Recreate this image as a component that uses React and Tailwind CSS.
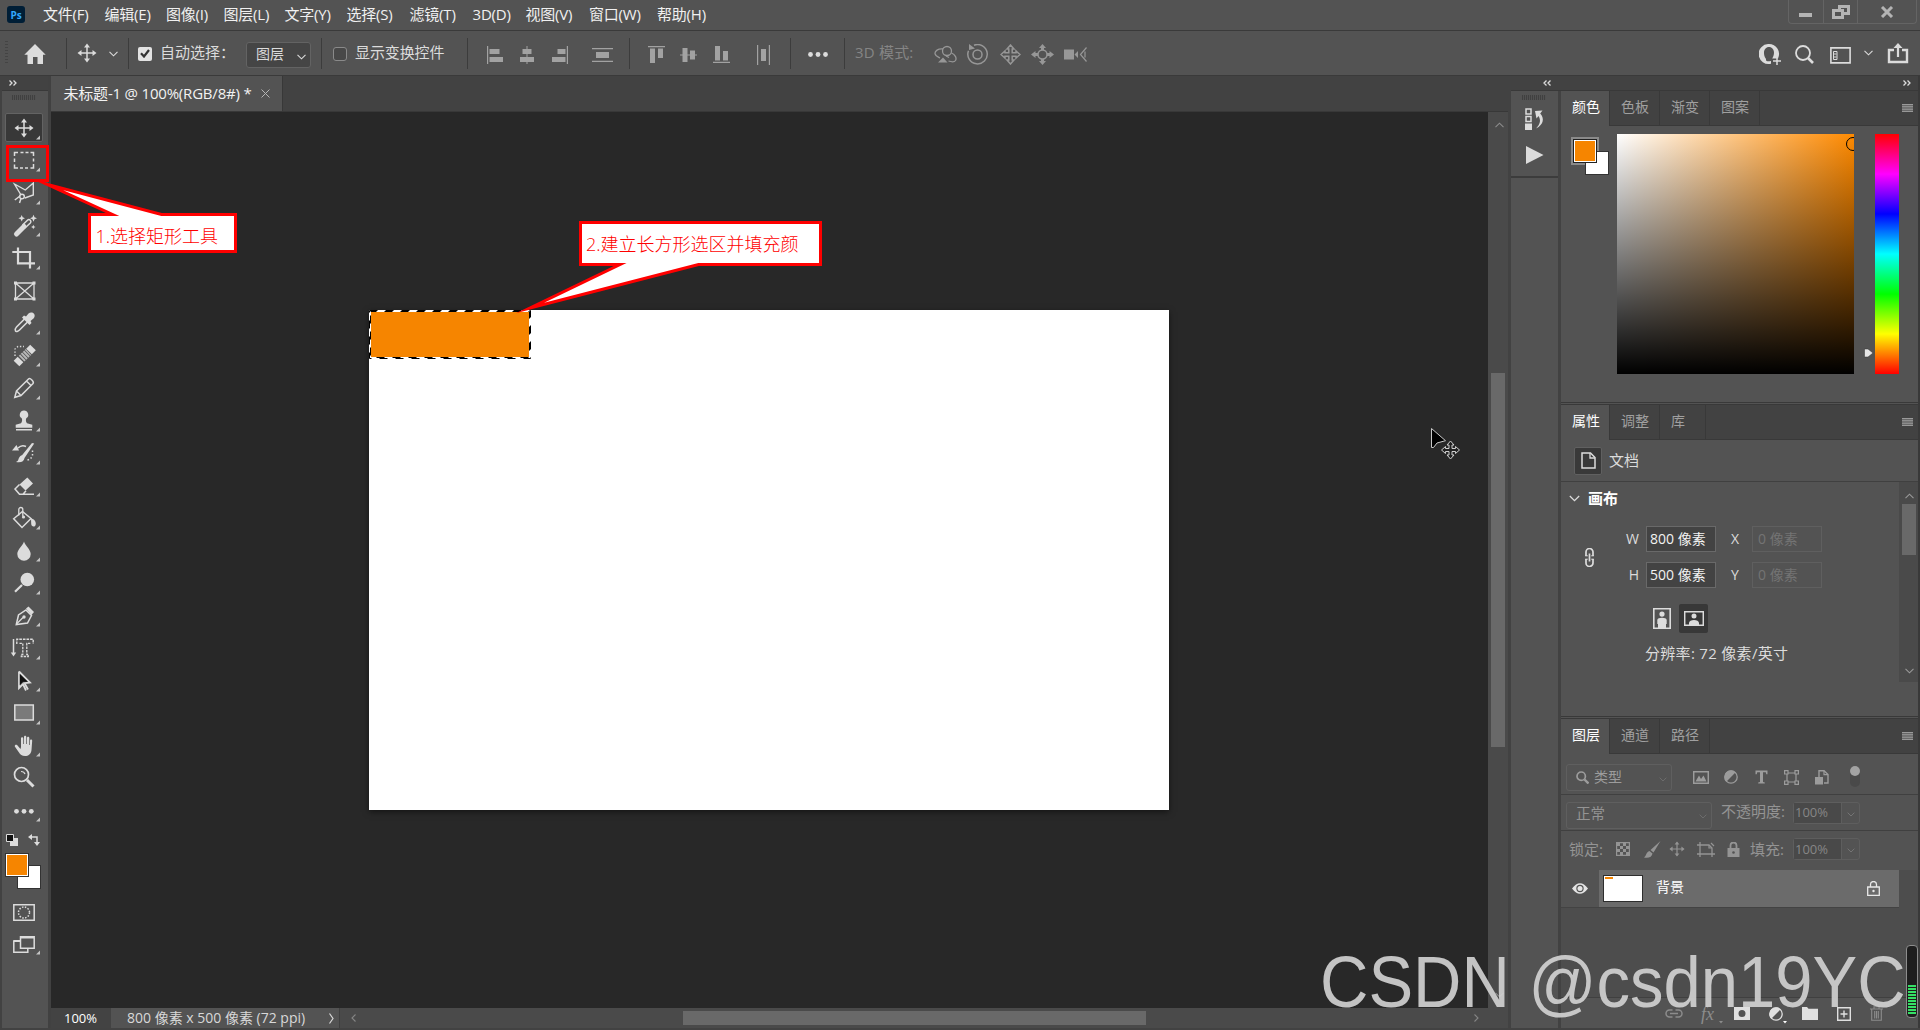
import React from "react";

/* ---------- small building blocks ---------- */
const Svg = ({ w = 24, h = 24, vb, className = "", children }) => (
  <svg width={w} height={h} viewBox={vb || `0 0 ${w} ${h}`} fill="none" stroke="currentColor" strokeWidth="1.5" className={"shrink-0 " + className}>
    {children}
  </svg>
);
const F = { fill: "currentColor", stroke: "none" };

const Chevron = ({ className = "", w = 9, h = 6 }) => (
  <Svg w={w} h={h} vb="0 0 9 6" className={className}>
    <path d="M.5 .8 4.5 4.8 8.5 .8" strokeWidth="1.1" />
  </Svg>
);
const Double = ({ left, className = "" }) => (
  <Svg w={8} h={6} className={className}>
    <path d={left ? "M3.5 .5 1 3 3.5 5.5M7.5 .5 5 3 7.5 5.5" : "M.5 .5 3 3 .5 5.5M4.5 .5 7 3 4.5 5.5"} strokeWidth="1.3" />
  </Svg>
);
const Grip = ({ className = "" }) => (
  <div className={"h-[5px] w-6 shrink-0 bg-[repeating-linear-gradient(90deg,#404040_0_1px,#515151_1px_2px)] " + className} />
);
const Sep = ({ className = "" }) => <div className={"h-[31px] w-px shrink-0 bg-[#3c3c3c] " + className} />;

const MoveGlyph = () => (
  <>
    <path d="M12 4v16M4 12h16" strokeWidth="1.5" />
    <path {...F} d="M12 2.5 15 6.5H9zM12 21.5 9 17.5h6zM2.5 12l4-3v6zM21.5 12l-4 3V9z" />
  </>
);

/* ---------- menu bar ---------- */
const menus = [
  ["文件(F)", "w-[61.5px]"], ["编辑(E)", "w-[61.5px]"], ["图像(I)", "w-[57.5px]"], ["图层(L)", "w-[61px]"],
  ["文字(Y)", "w-[62px]"], ["选择(S)", "w-[63px]"], ["滤镜(T)", "w-[63px]"], ["3D(D)", "w-[53px]"],
  ["视图(V)", "w-[63.5px]"], ["窗口(W)", "w-[68px]"], ["帮助(H)", "w-[60px]"],
];

function MenuBar() {
  return (
    <div className="flex h-[30px] items-start bg-[#535353]">
      <div className="mt-[6px] ml-[7px] flex h-[17px] w-[18px] items-center justify-center rounded-[3px] bg-[#001e36] text-[10px] font-bold text-[#31a8ff]">Ps</div>
      <div className="ml-[18px] flex h-[29px] items-center text-[15px] tracking-[-0.2px] text-[#f0f0f0]">
        {menus.map(([t, w]) => (
          <span key={t} className={"whitespace-nowrap " + w}>{t}</span>
        ))}
      </div>
      <div className="mr-[3px] ml-auto flex h-[24px] w-[129px] rounded-b-[4px] border border-t-0 border-[#646464] text-[#b4b4b4]">
        <div className="flex w-[35px] justify-center border-r border-[#646464]"><div className="mt-[13px] mr-px h-[4px] w-[13px] bg-[#b4b4b4]" /></div>
        <div className="flex w-[34px] justify-center border-r border-[#646464]">
          <Svg w={18} h={16} className="mt-[4px]"><path d="M1.5 6.5h9v7h-9zM7.5 6V2.5h9v7h-5" strokeWidth="3" /></Svg>
        </div>
        <div className="flex flex-1 justify-center">
          <Svg w={14} h={12} className="mt-[6px]"><path d="M2 1 12 11M12 1 2 11" strokeWidth="3" /></Svg>
        </div>
      </div>
    </div>
  );
}

/* ---------- options bar ---------- */
function OptionsBar() {
  return (
    <div className="flex h-[46px] items-center border-y border-t-[#3a3a3a] border-b-[#3a3a3a] bg-[#535353] text-[#dcdcdc]">
      <div className="ml-[5px] h-[24px] w-[3px] bg-[repeating-linear-gradient(#444_0_1px,#535353_1px_3px)]" />
      <Svg w={22} h={20} className="mt-[2px] ml-[16px]"><path {...F} d="M11 0 .3 10.8H3.5V20H9v-7h4.500v7H19V10.800h2.700z" /></Svg>
      <Sep className="ml-[20px]" />
      <Svg className="ml-[8px]" ><MoveGlyph /></Svg>
      <Chevron className="mt-[2px] ml-[10px]" />
      <Sep className="ml-[10px]" />
      <div className="mt-px ml-[9px] flex size-[14px] items-center justify-center rounded-[2px] bg-[#e3e3e3] text-[#333]">
        <Svg w={10} h={9}><path d="M1 4.200 4 7.500 9 1" strokeWidth="2.200" /></Svg>
      </div>
      <span className="mb-px ml-[8px] w-[85px] text-[15px] whitespace-nowrap">自动选择：</span>
      <div className="mt-[4px] ml-px flex h-[26px] w-[65px] items-center rounded-[3px] border border-[#636363] bg-[#454545] pl-[9px] pb-[2px] text-[14px]">
        图层<Chevron className="mt-[5px] ml-[13px]" />
      </div>
      <Sep className="ml-[10px]" />
      <div className="mt-[2px] ml-[11px] size-[14px] rounded-[3px] border border-[#8a8a8a] bg-[#484848]" />
      <span className="mb-px ml-[8px] w-[112px] text-[15px] tracking-[-0.1px] whitespace-nowrap">显示变换控件</span>
      <Sep />
      <div className="mt-[3px] flex items-center text-[#a2a2a2]">
        <Svg w={16} h={18} className="ml-[19px]"><path {...F} d="M0 0h1.200v18H0zM2.500 3h10v5h-10zM2.500 11h13.500v5H2.500z" /></Svg>
        <Svg w={14} h={18} className="ml-[17px]"><path {...F} d="M6.500 0h1v18h-1zM2.500 3h9v5h-9zM0 11h14v5H0z" /></Svg>
        <Svg w={16} h={18} className="ml-[18px]"><path {...F} d="M14.800 0H16v18h-1.200zM5.500 3h8v5h-8zM0 11h13.500v5H0z" /></Svg>
        <Svg w={21} h={14} className="ml-[24px]"><path {...F} d="M0 0h21v1.200H0zM0 12.800h21V14H0zM4 4h13v6H4z" /></Svg>
      </div>
      <Sep className="ml-[16px]" />
      <div className="mt-[3px] flex items-center text-[#a2a2a2]">
        <Svg w={17} h={17} className="ml-[18px]"><path {...F} d="M0 0h17v1.200H0zM2 2.500h5V17H2zM10 2.500h5V12h-5z" /></Svg>
        <Svg w={17} h={16} className="ml-[15px]"><path {...F} d="M0 7.400h17v1.200H0zM2.500 1h5v14h-5zM10 3.500h5v9h-5z" /></Svg>
        <Svg w={17} h={17} className="ml-[16px]"><path {...F} d="M0 15.800h17V17H0zM2 0h5v14.500H2zM10 5h5v9.500h-5z" /></Svg>
        <Svg w={13} h={20} className="ml-[27px]"><path {...F} d="M0 0h1.200v20H0zM11.800 0H13v20h-1.200zM4 4h5v12H4z" /></Svg>
      </div>
      <Sep className="ml-[20px]" />
      <Svg w={20} h={5} className="mt-[2px] ml-[17px]"><g {...F}><circle cx="2.500" cy="2.500" r="2.400" /><circle cx="10" cy="2.500" r="2.400" /><circle cx="17.500" cy="2.500" r="2.400" /></g></Svg>
      <Sep className="ml-[16px]" />
      <span className="mb-px ml-[10px] w-[79px] text-[15px] tracking-[0.2px] whitespace-nowrap text-[#858585]">3D 模式:</span>
      <div className="mt-[2px] flex items-center text-[#979797]">
        <Svg w={23} h={20}>
          <circle cx="13" cy="7" r="4.500" strokeWidth="1.300" /><path d="M9 5C4 4.500 .8 7 1 9.500c.2 2.500 3 3.500 5 4.500M17.500 9c3.500 1.500 5.500 5 4 7.500-1 1.500-4 1.500-7 .5M12 12l3 1.500" strokeWidth="1.300" /><path {...F} d="M9 13.500 13.500 18.500H4z" />
        </Svg>
        <Svg w={21} h={21} className="ml-[10px]">
          <circle cx="10.500" cy="10.500" r="4.500" /><path d="M7 1.200a9.700 9.700 0 1 1-5.500 5.500" /><path {...F} d="M2 0v6l6-1.500z" />
        </Svg>
        <Svg w={21} h={21} className="ml-[12px]"><path d="M10.500 1 14 5H12.200v3.800H16V7l4 3.500-4 3.500v-1.800h-3.800V16H14l-3.500 4L7 16h1.800v-3.800H5V14l-4-3.500L5 7v1.800h3.800V5H7z" /></Svg>
        <Svg w={23} h={21} className="ml-[10px]"><circle cx="11.500" cy="10.500" r="4.500" /><path {...F} d="M11.500 0 15 4h-2v2h-3V4H8zM11.500 21 8 17h2v-2h3v2h2zM0 10.500 4.500 7v2H7v3H4.500v2zM23 10.500 18.500 14v-2H16V9h2.500V7z" /></Svg>
        <Svg w={23} h={17} className="ml-[10px]"><path {...F} d="M0 3.500h10v10H0zM10.500 8.500 14 5v7z" /><path d="M22.500 1.500 16.500 8.500l6 7M21 5.500v6" strokeWidth="1.200" /></Svg>
      </div>
      <Svg w={22} h={21} className="mt-[2px] ml-auto">
        <path {...F} fillRule="evenodd" d="M10 0a10 10 0 1 0 2 19.700V17l-1.500.3C8 17.500 6.800 17 7 15c-1.800-2.500-2-4.500-2-6.500C5 5.500 7 3 10 3s5 2.500 5 5.500c0 2-.5 4-1.800 6H19A10 10 0 0 0 10 0z" />
        <path d="M18 13v8M14 17h8" />
      </Svg>
      <Svg w={19} h={19} className="mt-[2px] ml-[14px]"><circle cx="8" cy="8" r="7" strokeWidth="1.800" /><path d="m13 13 5 5" strokeWidth="2.600" /></Svg>
      <Svg w={21} h={17} className="ml-[16px] mt-[4px]"><path d="M.9.9h19.200v15H.9z" strokeWidth="1.600" /><path d="M3.500 4.500h3.500v8H3.500zM3.500 7h3M3.500 10h3" strokeWidth="1" /></Svg>
      <Chevron className="ml-[13px]" />
      <Svg w={22} h={21} className="mr-[11px] ml-[14px]"><path d="M7 7H2v12h18V7h-5" strokeWidth="2.400" /><path d="M11 14V4" strokeWidth="2.200" /><path {...F} d="M11 0 15.500 5h-9z" /></Svg>
    </div>
  );
}

/* ---------- left tool column ---------- */
const star = (x, y, r) => <path {...F} d={`M${x} ${y - r}l${r * 0.3} ${r * 0.7} ${r * 0.7} ${r * 0.3} ${-r * 0.7} ${r * 0.3} ${-r * 0.3} ${r * 0.7} ${-r * 0.3} ${-r * 0.7} ${-r * 0.7} ${-r * 0.3} ${r * 0.7} ${-r * 0.3}z`} />;

const tools = [
  { id: "move", g: <MoveGlyph /> },
  { id: "marquee", g: <path d="M2.500 7V3.500H6M8.500 3.500h3M13.500 3.500h3M18.500 3.500H21.500V7M21.500 9.500v3M21.500 15V19H18.500M16 19h-3M11 19H8M6 19H2.500V15.500M2.500 13V9.500" /> },
  { id: "lasso", g: <><path d="M9 14 2.500 3 13.300 9l8-7v12l-8.500 3" strokeWidth="1.400" /><circle cx="10" cy="15.500" r="2.300" /><path d="M8 15 2.800 19M9 17.500 7.500 22" /></> },
  { id: "wand", g: <><path d="M4.500 20 12 12.500" strokeWidth="5" strokeLinecap="round" /><path d="M10.500 11 15.500 6.200a1.800 1.800 0 0 1 2.800 2.800L13 14" />{star(9.700, 4.300, 3.300)}{star(21.500, 4.300, 3.500)}{star(21.300, 13, 2.200)}</> },
  { id: "crop", g: <path d="M6 1.500V17.300H23M.3 6H18V22.500" strokeWidth="2.200" /> },
  { id: "frame", nt: true, g: <><path d="M3.500 4h18.500v16H3.500zM3.500 4 22 20M22 4 3.500 20" strokeWidth="1.300" /><path {...F} d="M2 2.500h3v3H2zM20.500 2.500h3v3h-3zM2 18.500h3v3H2zM20.500 18.500h3v3h-3z" /></> },
  { id: "eyedropper", g: <><path d="M12.500 8 4.500 16c-1.500 1.500-1.500 3-1 4s2.500.5 4-1l8-8" strokeWidth="1.600" /><path {...F} d="M10 6.500l2-2 2 1 2.500-3C18.500.8 21 1.500 22 2.800s1 3-.5 4.700l-3 2.500 1 2-2 2z" /></> },
  { id: "heal", g: <><path d="M4.500 19.500l4-4" strokeWidth="8" /><path d="M17 7.500l4-4" strokeWidth="8" /><path d="M9.500 14.700 16.500 8" strokeWidth="8" stroke="#b8b8b8" strokeDasharray="2 .8" /><path d="M3 12V5l3-2.500h6" strokeWidth="1.400" strokeDasharray="1.400 1.800" /></> },
  { id: "pencil", g: <path d="M2.800 21.300 4.500 15 16.500 3c1.500-1.500 6 2.500 4.500 4.500L9 19.500zM4.500 15l4.500 4.500M14.500 5l4.500 4.500" /> },
  { id: "stamp", g: <path {...F} d="M12 1.500a4.200 4.200 0 0 1 2.500 7.600c-1 .9-.8 4 .5 5.200l5.300 1.500v3H3.700v-3L9 14.300c1.300-1.200 1.500-4.300.5-5.200A4.200 4.200 0 0 1 12 1.500zM4 20h16v1.400H4z" /> },
  { id: "history", g: <><path {...F} d="M22.200 2.500 12.500 17c-.5 3.500-3.500 5-8.500 4 2.200-1 2.200-2 2.700-3.500.8-2 2-3 3.300-3.300L20 2z M0 9.500 4.500 4 7 9.500z" /><path d="M6 7C9 4 12 4.500 14 5.500" /><path d="M20.500 9.500v5c-1 2.500-2.500 4-5 4.500" strokeDasharray="1.500 2" /></> },
  { id: "eraser", g: <><path {...F} d="M15.300 3.500 21 9.500l-7.500 7-6-6z" /><path d="M7.500 10.500 3 15l4.500 5.200H22M7.500 20.200h3.500l3-3.500" /></> },
  { id: "bucket", g: <><path d="M10.500 5.500 19 12.500 10 21.500 1.700 12.700z" /><path d="M6.800 9.500V3.500a2 2 0 0 1 4 0v6.500" strokeWidth="1.300" /><path {...F} d="M19 12.500c3.500.5 4.800 3 4.800 5.200s-1.200 2.800-2.300 2.800-2.300-1-2.300-2.800z" /><circle cx="11.500" cy="11" r="1.600" {...F} /></> },
  { id: "blur", g: <path {...F} d="M12 2.500c1 4 6.700 8 6.700 12.500a6.700 6.700 0 0 1-13.400 0C5.300 10.500 11 6.500 12 2.500z" /> },
  { id: "dodge", g: <><circle cx="15.300" cy="8.500" r="6.800" {...F} /><path d="M10 14 3 20.800" strokeWidth="2.200" /></> },
  { id: "pen", g: <><path d="M4.300 20.500 6.500 11l7.500-5 5.500 5.500-4 7.500z" /><path d="M4.500 20 11 13.500" strokeWidth="1.200" /><circle cx="12" cy="13" r="1.700" {...F} /><path {...F} d="M14 4.500 16.500 2.500 22 8l-2.500 3z" /></> },
  { id: "type", g: <><path d="M1.500 3v14" /><path {...F} d="M-1.200 16.500h5.400L1.500 20.500z" /><path d="M4.800 8V3.300H21.200V8" strokeWidth="1.400" strokeDasharray="2.600 1" /><path d="M7.500 7.300h3.300V18.500H9.300v2h7v-2h-1.500V7.300h3.500" strokeWidth="1.300" strokeDasharray="2.400 1" /></> },
  { id: "path", g: <><path d="M7 2.500V19l4-4 3 6.500" strokeWidth="1.800" /><path d="M7 2.500 18 13.500 12.500 14.200 16 20.500" strokeWidth="1.800" /><path d="M7.800 5V16l3-3.200h5z" fill="#111" stroke="none" /></> },
  { id: "rect", g: <rect x="2.800" y="4" width="18.500" height="15" fill="#7a7a7a" /> },
  { id: "hand", g: <path {...F} d="M9 13V4.500c0-1.700 2.200-1.700 2.300 0V10h.7V3c0-1.700 2.300-1.700 2.300 0v7h.7V4c0-1.600 2.300-1.600 2.300 0v7h.7V6.500c0-1.500 2.200-1.500 2.200 0L19.500 16c-.5 4-3 6-6.500 6-3 0-4.800-1.500-6-3.500L2.800 12.500c-.3-1.400 1.200-2.200 2.500-1.200L8.500 15z" /> },
  { id: "zoom", nt: true, g: <><circle cx="9.500" cy="8.500" r="7" strokeWidth="1.700" /><path d="M9 5.500c2 0 3.500 1 4 2.500" strokeWidth="1.200" /><path d="m15 14 6.500 6.500" strokeWidth="3" /></> },
  { id: "more", g: <g {...F}><circle cx="4.500" cy="12.300" r="2.400" /><circle cx="12" cy="12.300" r="2.400" /><circle cx="19.300" cy="12.300" r="2.400" /></g> },
];

const Tri = () => <Svg w={5} h={5} className="absolute right-[5px] bottom-[5px] text-[#c4c4c4]"><path {...F} d="M5 .5V4.500H1z" /></Svg>;

function ToolBar() {
  return (
    <div className="flex w-[51px] shrink-0 flex-col border-r-[3px] border-l-2 border-r-[#414141] border-l-[#424242] bg-[#535353] text-[#dcdcdc]">
      <div className="flex h-[14px] items-center bg-[#424242] pl-[7px]"><Double className="mb-px" /></div>
      <div className="h-px bg-[#393939]" />
      <Grip className="mt-[4px] ml-[10px]" />
      <div className="mt-[12px] flex flex-col">
        {tools.map((t, i) => (
          <div key={t.id} className="relative flex h-[32.5px] w-[43px] items-center pl-[10px]">
            {i === 0 && <div className="absolute top-[1px] left-[3px] h-[29px] w-[38px] rounded-[2px] border border-[#636363] bg-[#383838]" />}
            <Svg className="relative overflow-visible">{t.g}</Svg>
            {!t.nt && <Tri />}
          </div>
        ))}
      </div>
      <div className="mt-[7px] flex items-center">
        <Svg w={12} h={12} className="ml-[4px]"><path {...F} d="M4 4h8v8H4z" /><path d="M.5.5h7v7h-7z" fill="#111" strokeWidth="1" /></Svg>
        <Svg w={12} h={12} className="ml-[10px]"><path d="M3 3h6v6" /><path {...F} d="M0 3l4-3v6zM9 12 6 8h6z" /></Svg>
      </div>
      <div className="mt-[7px] ml-[3px] grid h-[37px] w-[37px]">
        <div className="col-start-1 row-start-1 mt-[12px] ml-[12px] size-[24px] border border-[#333] bg-white" />
        <div className="relative col-start-1 row-start-1 size-[24px] border border-[#333] bg-[#f68500] inset-ring-1 inset-ring-white" />
      </div>
      <Svg w={22} h={17} className="mt-[14px] ml-[11px]"><path d="M.8.8h20.400v15.400H.8z" /><circle cx="11" cy="8.500" r="5.500" strokeDasharray="1.500 1.400" /></Svg>
      <div className="relative mt-[15px] h-[24px] w-[43px]">
        <Svg w={22} h={17} className="ml-[11px]"><path d="M7 5H.8v11.200h14V13" /><path d="M7.500.8h13.700v11.400H7.500z" /><path d="M.8 5H7M7.500 1.500h13.700" strokeWidth="2" /></Svg>
        <Tri />
      </div>
    </div>
  );
}

/* ---------- document area ---------- */
function DocumentArea() {
  return (
    <div className="flex w-[1457px] shrink-0 flex-col">
      <div className="flex h-[36px] shrink-0 border-b border-[#383838] bg-[#424242]">
        <div className="flex w-[232px] items-center border-r border-[#383838] bg-[#535353] pl-[12.500px] text-[15px] text-[#f2f2f2]">
          <span className="mb-px w-[197.500px] tracking-[-0.2px] whitespace-nowrap">未标题-1 @ 100%(RGB/8#) *</span>
          <Svg w={9} h={9} className="text-[#b5b5b5]"><path d="M.5.5l8 8M8.500.5l-8 8" strokeWidth="1" /></Svg>
        </div>
      </div>
      <div className="flex h-[896px]">
        <div className="w-[1437px] bg-[#282828] pt-[198px] pl-[318px]">
          <div className="h-[500px] w-[800px] bg-white shadow-[0_2px_6px_rgba(0,0,0,0.5)]">
            <Svg w={163} h={50}>
              <path d="M1 1h160v47H1z" fill="#f68500" stroke="#fff" strokeWidth="2" />
              <path d="M.500.500h161v48H.5z" stroke="#000" strokeWidth="1" strokeDasharray="8 8" />
              <path d="M1.500 1.500h159v46H1.500z" stroke="#000" strokeWidth="1" strokeDasharray="8 8" strokeDashoffset="2" />
            </Svg>
          </div>
        </div>
        <div className="flex w-[20px] flex-col items-center bg-[#4a4a4a] text-[#8c8c8c]">
          <Chevron className="mt-[10px] ml-[3px] rotate-180" />
          <div className="mt-[245px] h-[374px] w-[14px] bg-[#696969]" />
          <Chevron className="mt-auto mb-[10px] ml-[3px]" />
        </div>
      </div>
      <div className="flex h-[20px] items-center bg-[#4a4a4a] text-[14px] text-[#d8d8d8]">
        <div className="flex h-full w-[60px] items-center bg-[#434343] pl-[13px] text-[13px] text-white">100%</div>
        <div className="flex h-full w-[229px] items-center border-r border-[#404040] bg-[#535353] pl-[16px]">
          <span className="w-[202px] whitespace-nowrap">800 像素 x 500 像素 (72 ppi)</span>
          <Svg w={5} h={11}><path d="M.5.5 4 5.500.5 10.500" strokeWidth="1.200" /></Svg>
        </div>
        <Svg w={5} h={8} className="ml-[11px] text-[#858585]"><path d="M4.500.5 1 4l3.500 3.500" strokeWidth="1.100" /></Svg>
        <div className="ml-[327px] h-[14px] w-[463px] bg-[#696969]" />
        <Svg w={5} h={8} className="ml-[328px] text-[#858585]"><path d="M.5.5 4 4 .5 7.500" strokeWidth="1.100" /></Svg>
      </div>
    </div>
  );
}

/* ---------- collapsed icon strip ---------- */
function IconStrip() {
  return (
    <div className="flex w-[47px] flex-col bg-[#535353] text-[#dcdcdc]">
      <div className="flex h-[87px] flex-col items-start border-b-2 border-[#3c3c3c]">
        <Grip className="mt-[4px] ml-[11px]" />
        <Svg w={20} h={22} className="mt-[8px] ml-[14px]">
          <path d="M1 1h5v5H1zM1 8.500h5v5H1z" strokeWidth="1.500" /><path {...F} d="M0 15.500h7V22H0zM10 3l7.500-.5-2.300 3C19.500 10 19 16.500 11 20.500c4.500-4.500 5-8.500 2.500-12.500L11.500 10.500z" />
        </Svg>
        <Svg w={18} h={18} className="mt-[16px] ml-[15px]"><path {...F} d="M0 0 17.500 9 0 18z" /></Svg>
      </div>
    </div>
  );
}

/* ---------- right panels ---------- */
const MenuLines = () => <Svg w={11} h={8} className="mr-[5px] ml-auto text-[#c0c0c0]"><path d="M0 .8h11M0 2.900h11M0 5.100h11M0 7.200h11" strokeWidth="1" /></Svg>;

function Tabs({ names, widths }) {
  return (
    <div className="flex h-[35px] shrink-0 items-center border-b border-[#393939] bg-[#424242] text-[14px]">
      {names.map((n, i) => (
        <div key={n} className={"flex h-[35px] items-center border-r border-[#393939] pl-[11px] pb-[3px] " + widths[i] + (i === 0 ? " bg-[#535353] text-white" : " text-[#a0a0a0]")}>{n}</div>
      ))}
      <MenuLines />
    </div>
  );
}

function ColorPanel() {
  return (
    <div className="flex h-[312px] flex-col border-b border-[#393939]">
      <Tabs names={["颜色", "色板", "渐变", "图案"]} widths={["w-[49px]", "w-[50px]", "w-[50px]", "w-[50px]"]} />
      <div className="flex pt-[8px]">
        <div className="mt-[3px] ml-[10px] grid h-[38px] w-[46px] shrink-0 content-start">
          <div className="col-start-1 row-start-1 size-[28px] bg-[#8a8a8a]" />
          <div className="relative col-start-1 row-start-1 mt-[14px] ml-[14px] size-[24px] border border-[#333] bg-white" />
          <div className="relative col-start-1 row-start-1 mt-[2px] ml-[2px] size-[24px] border border-[#222] bg-[#f68500] inset-ring-1 inset-ring-white" />
        </div>
        <div className="h-[240px] w-[237px] overflow-hidden bg-[linear-gradient(to_top,#000,transparent),linear-gradient(to_right,#fff,#ff8a00)]">
          <div className="mt-[3px] ml-[229px] size-[14px] rounded-full border border-black" />
        </div>
        <Svg w={10} h={10} className="mt-[214px] ml-[10px]"><path d="M.5 1h3.500L9 5 4 9H.5z" fill="#e6e6e6" stroke="#333" strokeWidth=".5" /></Svg>
        <div className="ml-px h-[240px] w-[24px] bg-[linear-gradient(#f00,#f0f_16.7%,#00f_33.3%,#0ff_50%,#0f0_66.7%,#ff0_83.3%,#f00)]" />
      </div>
    </div>
  );
}

const Field = ({ children, off }) => (
  <div className={"flex h-[26px] w-[70px] items-center border pl-[3px] pb-px text-[14px] whitespace-nowrap " + (off ? "border-[#5f5f5f] pl-[5px] text-[#747474]" : "border-[#696969] bg-[#434343] text-[#f2f2f2]")}>{children}</div>
);

function PropertiesPanel() {
  return (
    <div className="mt-px flex h-[313px] flex-col border-y border-[#393939]">
      <Tabs names={["属性", "调整", "库"]} widths={["w-[49px]", "w-[50px]", "w-[46px]"]} />
      <div className="flex h-[42px] shrink-0 items-center border-b border-[#404040] text-[#dcdcdc]">
        <div className="ml-[13px] flex size-[28px] items-center justify-center rounded-[2px] border border-[#606060] bg-[#393939]">
          <Svg w={15} h={17}><path d="M1 1h8.500l4.500 4.500V16H1z" /><path d="M9 1v5h5" strokeWidth="1.300" /></Svg>
        </div>
        <span className="ml-[7px] text-[15px]">文档</span>
      </div>
      <div className="flex h-[200px]">
        <div className="flex w-[339px] flex-col text-[#dcdcdc]">
          <div className="mt-[4px] flex h-[24px] items-center"><Chevron w={11} h={7} className="ml-[8px]" /><span className="ml-[8px] text-[15px] font-bold text-white">画布</span></div>
          <div className="mt-[16px] flex items-center">
            <Svg w={11} h={19} className="ml-[23px]"><path d="M2 8V4a3.500 3.500 0 0 1 7 0v4M2 11v4a3.500 3.500 0 0 0 7 0v-4" strokeWidth="1.700" /><path d="M5.500 5.500v8" strokeWidth="1.700" /><path d="M1.200 7.800h2.600M7.200 7.800h2.600M1.200 11.200h2.600M7.200 11.200h2.600" strokeWidth="1" /></Svg>
            <div className="ml-[26px] grid grid-cols-[25px_70px_36px_70px] items-center gap-y-[10px] text-[14px]">
              <span className="pr-[7px] text-right">W</span><Field>800 像素</Field><span className="pl-[2px] text-center">X</span><Field off>0 像素</Field>
              <span className="pr-[7px] text-right">H</span><Field>500 像素</Field><span className="pl-[2px] text-center">Y</span><Field off>0 像素</Field>
            </div>
          </div>
          <div className="mt-[16px] ml-[92px] flex items-center">
            <Svg w={18} h={21}><path d="M.8.8h16.400v19.400H.8z" strokeWidth="1.600" /><path {...F} d="M9 3.500a2.600 2.600 0 1 1 0 5.200 2.600 2.600 0 0 1 0-5.200zM4.300 12c0-3 9.400-3 9.400 0v4H13v4H5v-4h-.7z" /></Svg>
            <div className="ml-[8px] flex size-[29px] items-center justify-center rounded-[2px] bg-[#383838]">
              <Svg w={20} h={15}><path d="M.7.7h18.600v13.600H.7z" /><path {...F} d="M10 2.500a2.500 2.500 0 1 1 0 5 2.500 2.500 0 0 1 0-5zM5 15v-3c0-4 10-4 10 0v3z" /></Svg>
            </div>
          </div>
          <span className="mt-[13px] ml-[84px] text-[15px] tracking-[0.3px] whitespace-nowrap">分辨率: 72 像素/英寸</span>
        </div>
        <div className="flex w-[19px] flex-col items-center bg-[#4a4a4a] text-[#999]">
          <Chevron className="mt-[11px] ml-[2px] rotate-180" />
          <div className="mt-[5px] h-[51px] w-[14px] bg-[#696969]" />
          <Chevron className="mt-auto mb-[8px] ml-[2px]" />
        </div>
      </div>
    </div>
  );
}

const Percent = () => (
  <div className="flex h-[22px] w-[67px] rounded-[3px] border border-[#5e5e5e]">
    <div className="flex w-[48px] items-center border-r border-[#5e5e5e] bg-[#494949] pl-px text-[13px] text-[#868686]">100%</div>
    <div className="flex flex-1 items-center justify-center text-[#777]"><Chevron w={8} h={5} className="mt-[3px]" /></div>
  </div>
);

function LayersPanel() {
  return (
    <div className="mt-px flex flex-1 flex-col border-t border-[#393939]">
      <Tabs names={["图层", "通道", "路径"]} widths={["w-[49px]", "w-[50px]", "w-[50px]"]} />
      <div className="flex h-[41px] shrink-0 items-center border-b border-[#404040] text-[#9c9c9c]">
        <div className="mt-[7px] ml-[5px] flex h-[27px] w-[106px] items-center rounded-[3px] border border-[#5f5f5f] pl-[9px] text-[14px]">
          <Svg w={13} h={13}><circle cx="5.200" cy="5.200" r="4.200" strokeWidth="1.700" /><path d="m8.500 8.500 4 4" strokeWidth="2.400" /></Svg>
          <span className="mb-[2px] ml-[5px]">类型</span>
          <Chevron w={8} h={5} className="mt-[4px] mr-[4px] ml-auto text-[#6f6f6f]" />
        </div>
        <Svg w={16} h={13} className="mt-[6px] ml-[21px]"><path d="M.7.7h14.600v11.600H.7z" /><path {...F} d="M2.500 10.500 6 4.500l2 3.500 2.500-3.500 3 6z" /></Svg>
        <Svg w={14} h={14} className="mt-[6px] ml-[15px]"><circle cx="7" cy="7" r="6.200" strokeWidth="1.300" /><path {...F} d="M11.700 2.300A6.600 6.600 0 0 0 2.300 11.700z" /></Svg>
        <Svg w={13} h={14} className="mt-[6px] ml-[17px]"><path {...F} d="M.5.5h12v3.800h-1.200l-.5-2H8v9.700l1.800.5v1H3.200v-1L5 12V2.300H2.200l-.5 2H.5z" /></Svg>
        <Svg w={15} h={15} className="mt-[6px] ml-[16px]"><path d="M3 3h9v9H3z" strokeWidth="1.200" /><path d="M.6.600h3.400v3.400H.6zM11 .6h3.400v3.400H11zM.6 11h3.400v3.400H.6zM11 11h3.400v3.400H11z" strokeWidth="1.200" fill="#535353" /></Svg>
        <Svg w={14} h={15} className="mt-[6px] ml-[16px]"><path d="M4 7V.7h5L13 4.500V13H9" strokeWidth="1.400" /><path d="M9 .7v4h4" strokeWidth="1.200" /><path {...F} d="M0 7h8v7.500H0z" /></Svg>
        <div className="mt-[4px] ml-[21px] h-[21px] w-[10px] rounded-full bg-[#494949]"><div className="size-[10px] rounded-full bg-[#a2a2a2]" /></div>
      </div>
      <div className="flex h-[36px] shrink-0 items-center border-b border-[#404040] text-[15px] text-[#949494]">
        <div className="mt-[5px] ml-[5px] flex h-[27px] w-[146px] items-center rounded-[3px] border border-[#5f5f5f] pl-[9px]">
          <span className="mb-[2px] text-[14.500px]">正常</span><Chevron w={8} h={5} className="mt-[3px] mr-[4px] ml-auto text-[#6f6f6f]" />
        </div>
        <span className="mb-[3px] ml-[9px] w-[72px] whitespace-nowrap">不透明度:</span>
        <Percent />
      </div>
      <div className="flex h-[39px] shrink-0 items-center pb-[3px] text-[15px] text-[#949494]">
        <span className="ml-[8px] w-[47px]">锁定:</span>
        <Svg w={14} h={14}><path d="M.6.600h12.800v12.800H.6z" strokeWidth="1.200" /><path {...F} d="M1 1h3v3H1zM7 1h3v3H7zM4 4h3v3H4zM10 4h3v3h-3zM1 7h3v3H1zM7 7h3v3H7zM4 10h3v3H4zM10 10h3v3h-3z" /></Svg>
        <Svg w={17} h={17} className="ml-[14px]"><path {...F} d="M16.500 0 9.500 11.500 6.500 9zM5.500 10 8.500 12.500C8 16 4.500 17.500 0 16.500c2.500-1.500 2-5.500 5.500-6.500z" /></Svg>
        <Svg w={16} h={16} vb="2 2 20 20" className="ml-[8px]"><MoveGlyph /></Svg>
        <Svg w={18} h={15} className="ml-[12px]"><path d="M3 0v15M0 3h12l3 3v9M0 12h18" strokeWidth="1.300" /><path d="M12 3v3h3M14 1l3 3" strokeWidth="1.200" /></Svg>
        <Svg w={13} h={15} className="ml-[12px]"><path {...F} d="M.5 6h12v9H.5z" /><path d="M3.500 6V3.500a3 3 0 0 1 6 0V6" strokeWidth="1.800" /><circle cx="6.500" cy="10.500" r="1.300" fill="#535353" stroke="none" /></Svg>
        <span className="mr-px ml-[10px] w-[42px]">填充:</span>
        <Percent />
      </div>
      <div className="flex h-[128px] shrink-0 border-b border-[#404040] bg-[#4d4d4d]">
        <div className="w-[338px]">
          <div className="flex h-[38px] items-center border-b border-[#434343]">
            <div className="flex h-full w-[38px] items-center bg-[#535353]">
              <Svg w={16} h={11} className="ml-[11px] text-[#e4e4e4]"><path {...F} fillRule="evenodd" d="M0 5.500Q8-5 16 5.500 8 16 0 5.500zM4.300 5.500a3.700 3.700 0 0 0 7.400 0 3.700 3.700 0 0 0-7.400 0z" /><circle cx="8" cy="5.500" r="2.500" {...F} /></Svg>
            </div>
            <div className="flex h-full flex-1 items-center bg-[#6b6b6b]">
              <div className="ml-[4px] h-[27px] w-[40px] border border-[#2e2e2e] bg-white pt-px pl-px"><div className="h-[2px] w-[8px] bg-[#f68500]" /></div>
              <span className="mb-[3px] ml-[13px] text-[14px] text-white">背景</span>
              <Svg w={13} h={15} className="mr-[19px] ml-auto text-[#e8e8e8]"><path d="M.7 6h11.600v8.300H.7zM3.500 6V3.500a3 3 0 0 1 6 0V6" strokeWidth="1.300" /><circle cx="6.500" cy="10" r="1.200" {...F} /></Svg>
            </div>
          </div>
        </div>
      </div>
      <div className="flex h-[30px] items-center pt-[1px] text-[#8c8c8c]">
        <Svg w={18} h={9} className="ml-[104px]"><path d="M7.500 1H4.500a3.500 3.500 0 0 0 0 7h3M10.500 1h3a3.500 3.500 0 0 1 0 7h-3M5 4.500h8" /></Svg>
        <span className="ml-[18px] w-[18px] font-['Liberation_Serif'] text-[18px] leading-none italic">fx</span>
        <Svg w={4} h={3} className="mt-[18px]"><path {...F} d="M0 0h4L2 2.500z" /></Svg>
        <Svg w={16} h={13} className="ml-[11px] text-[#e0e0e0]"><path {...F} fillRule="evenodd" d="M0 0h16v13H0zM4.500 6.500a3.500 3.500 0 0 0 7 0 3.500 3.500 0 0 0-7 0z" /></Svg>
        <Svg w={14} h={14} className="ml-[19px] text-[#e0e0e0]"><circle cx="7" cy="7" r="6.200" strokeWidth="1.300" /><path {...F} d="M11.700 2.300A6.600 6.600 0 0 0 2.300 11.700z" /></Svg>
        <Svg w={4} h={3} className="mt-[18px] text-white"><path {...F} d="M0 0h4L2 2.500z" /></Svg>
        <Svg w={16} h={13} className="ml-[14.500px] text-[#e0e0e0]"><path {...F} d="M0 1.500V0h5l1.500 1.800H16V13H0z" /></Svg>
        <Svg w={14} h={14} className="ml-[19px] text-[#e0e0e0]"><path d="M.7.700h12.600v12.600H.7zM7 3.500v7M3.500 7h7" strokeWidth="1.400" /></Svg>
        <Svg w={13} h={15} className="ml-[19px]"><path d="M0 3h13M4 3V.7h5V3M1.700 3v11.300h9.600V3M4.700 5v7.500M6.500 5v7.500M8.300 5v7.500" strokeWidth="1.100" /></Svg>
      </div>
    </div>
  );
}

/* ---------- annotation overlay ---------- */
function Annotations() {
  return (
    <div className="pointer-events-none absolute inset-0 overflow-hidden text-[18px] text-[#f00]">
      <div className="absolute top-[145px] left-[6px] h-[37px] w-[43px] border-[3px] border-[#f00]" />
      <svg className="absolute inset-0" width="1920" height="1030" fill="#fff" stroke="#f00" strokeWidth="3" strokeMiterlimit="40">
        <path d="M89.500 214.500H112.500L47 184.300 161.500 214.500H235.500V251.500H89.500z" />
        <path d="M580.500 222.500H820.500V264.500H698.500L530 308 620 264.500H580.500z" />
      </svg>
      <div className="absolute top-[214px] left-[95.500px] flex h-[40px] items-center pt-[4px] font-light whitespace-nowrap">1.选择矩形工具</div>
      <div className="absolute top-[221px] left-[586px] flex h-[45px] items-center pt-px font-light whitespace-nowrap">2.建立长方形选区并填充颜</div>
      <svg className="absolute top-[427px] left-[1430px]" width="32" height="34" fill="#000" stroke="#c8c8c8" strokeWidth="1">
        <path d="M1.500 1.500V20.500H3.500L7 16l8.500-2.300z" />
        <path stroke="#d0d0d0" strokeWidth="1" d="M20.500 14l3.500 4h-2v3.500h3.500v-2l4 3.500-4 3.500v-2H22V28h2l-3.500 4-3.500-4h2v-3.500h-3.500v2l-4-3.500 4-3.500v2H19V18h-2z" fill="#222" />
      </svg>
      <div className="absolute top-[945px] left-[1906px] flex h-[73px] w-[12px] flex-col justify-end rounded-[4px] border border-[#8d8d8d] bg-[#1e1e1e] p-px pb-[3px]">
        <div className="h-[29px] bg-[repeating-linear-gradient(#35e065_0_2px,#1e1e1e_2px_3px)]" />
      </div>
      <div className="absolute top-[943px] left-[1320px] origin-left scale-x-[0.918] font-['Liberation_Sans'] text-[73px] leading-[78px] whitespace-nowrap text-[#d4d4d4]/90">CSDN @csdn19YC</div>
    </div>
  );
}

export default function App() {
  return (
    <div className="relative flex h-[1030px] w-[1920px] flex-col overflow-hidden bg-[#424242] font-['Open_Sans','Noto_Sans_CJK_SC',sans-serif] leading-none select-none">
      <MenuBar />
      <OptionsBar />
      <div className="flex h-[952px]">
        <ToolBar />
        <DocumentArea />
        <div className="ml-[3px] flex w-[409px] flex-col border-r-2 border-[#393939]">
          <div className="flex h-[14px] shrink-0 items-center bg-[#424242] text-[#dcdcdc]">
            <Double left className="mb-px ml-[32px]" />
            <Double className="mr-[7px] mb-px ml-auto" />
          </div>
          <div className="flex flex-1 border-t border-[#393939]">
            <IconStrip />
            <div className="ml-[3px] flex w-[357px] flex-1 flex-col bg-[#535353]">
              <ColorPanel />
              <PropertiesPanel />
              <LayersPanel />
            </div>
          </div>
        </div>
      </div>
      <Annotations />
    </div>
  );
}
